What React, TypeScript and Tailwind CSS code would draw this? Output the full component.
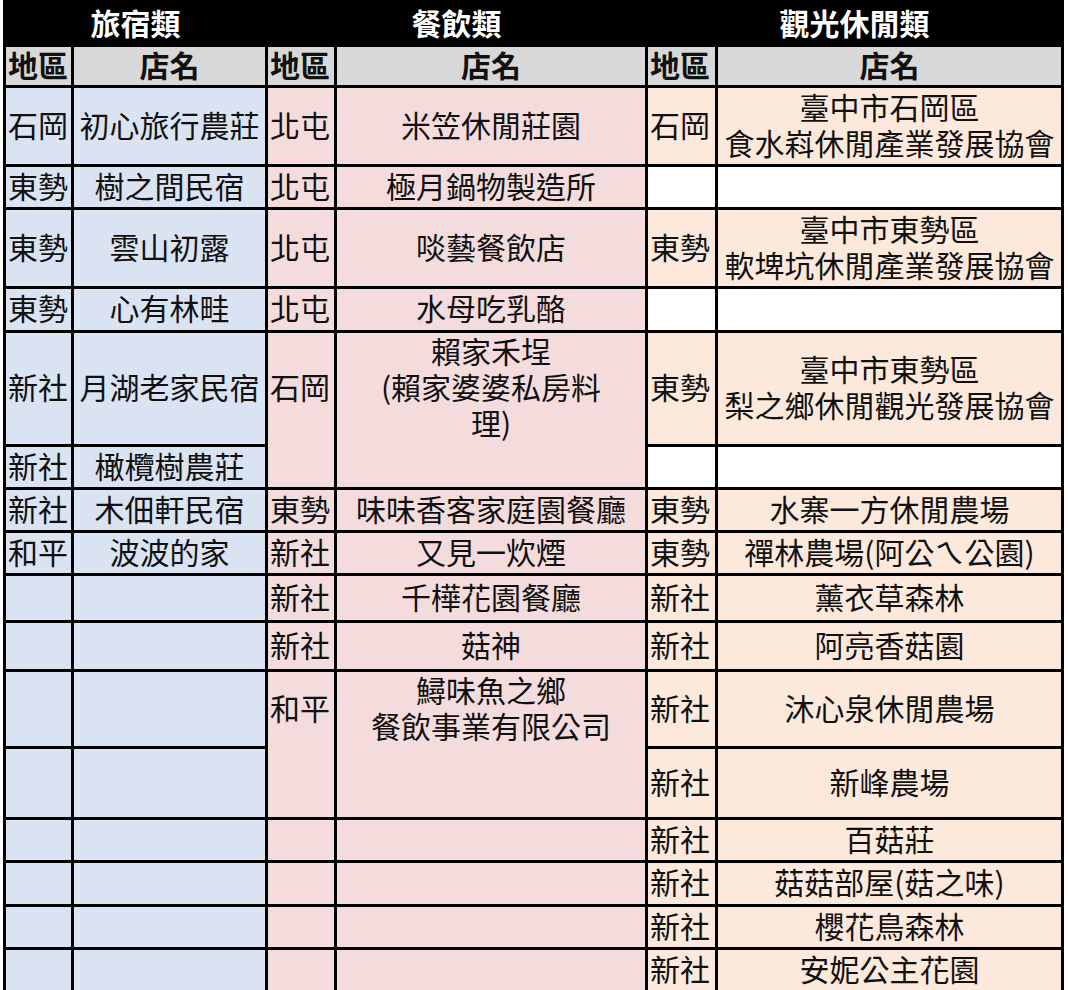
import React from "react";

const BLUE = "bg-[#dae3f1]";
const PINK = "bg-[#f4dcdd]";
const PEACH = "bg-[#fde9dc]";
const WHITE = "bg-white";
const GRAY = "bg-[#d8d8d8]";

type P = { bg: string; children?: React.ReactNode; extra?: string };

function R({ bg, children, extra = "" }: P) {
  return (
    <div className={`${bg} ${extra} flex items-center justify-start pl-[2px] pb-[5px] text-[30px] leading-[36px] whitespace-nowrap`}>
      {children}
    </div>
  );
}

function N({ bg, children, extra = "" }: P) {
  return (
    <div className={`${bg} ${extra} flex flex-col items-center justify-center pb-[5px] text-center text-[30px] leading-[36px] whitespace-nowrap`}>
      {children}
    </div>
  );
}

function Row2({ bg, region, name }: { bg: string; region?: string; name?: React.ReactNode }) {
  return (
    <>
      <R bg={bg}>{region}</R>
      <N bg={bg}>{name}</N>
    </>
  );
}

export default function App() {
  return (
    <div className="w-[1068px] h-[990px] bg-white overflow-hidden font-['Noto_Sans_CJK_TC','Noto_Sans_CJK_SC','Noto_Sans',sans-serif] text-[#111]">
      <div className="ml-[3px] w-[1061px] bg-black px-[3px] grid gap-[3px] grid-cols-[65px_191px_66px_308px_67px_343px] grid-rows-[44px_38px_76px_40px_76px_41px_111px_40px_40px_40px_44px_46px_74px_68px_40px_41px_40px_40px]">
        {/* header */}
        <div className="col-span-2 bg-black text-white font-bold text-[30px] leading-[36px] flex items-center justify-center">旅宿類</div>
        <div className="col-span-2 bg-black text-white font-bold text-[30px] leading-[36px] flex items-center justify-center">餐飲類</div>
        <div className="col-span-2 bg-black text-white font-bold text-[30px] leading-[36px] flex items-center justify-center">觀光休閒類</div>

        {/* subheader */}
        <R bg={GRAY} extra="font-bold">地區</R>
        <N bg={GRAY} extra="font-bold">店名</N>
        <R bg={GRAY} extra="font-bold">地區</R>
        <N bg={GRAY} extra="font-bold">店名</N>
        <R bg={GRAY} extra="font-bold">地區</R>
        <N bg={GRAY} extra="font-bold">店名</N>

        {/* r1 */}
        <Row2 bg={BLUE} region="石岡" name="初心旅行農莊" />
        <Row2 bg={PINK} region="北屯" name="米笠休閒莊園" />
        <Row2 bg={PEACH} region="石岡" name={<><span>臺中市石岡區</span><span>食水嵙休閒產業發展協會</span></>} />

        {/* r2 */}
        <Row2 bg={BLUE} region="東勢" name="樹之間民宿" />
        <Row2 bg={PINK} region="北屯" name="極月鍋物製造所" />
        <Row2 bg={WHITE} />

        {/* r3 */}
        <Row2 bg={BLUE} region="東勢" name="雲山初露" />
        <Row2 bg={PINK} region="北屯" name="啖藝餐飲店" />
        <Row2 bg={PEACH} region="東勢" name={<><span>臺中市東勢區</span><span>軟埤坑休閒產業發展協會</span></>} />

        {/* r4 */}
        <Row2 bg={BLUE} region="東勢" name="心有林畦" />
        <Row2 bg={PINK} region="北屯" name="水母吃乳酪" />
        <Row2 bg={WHITE} />

        {/* r5 */}
        <Row2 bg={BLUE} region="新社" name="月湖老家民宿" />
        <div className={`${PINK} row-span-2 flex flex-col`}>
          <div className="h-[111px] flex items-center pl-[2px] pb-[5px] text-[30px] leading-[36px] whitespace-nowrap">石岡</div>
        </div>
        <div className={`${PINK} row-span-2 flex flex-col`}>
          <div className="h-[111px] flex flex-col items-center justify-center pb-[5px] text-[30px] leading-[36px] whitespace-nowrap">
            <span>賴家禾埕</span>
            <span>(賴家婆婆私房料</span>
            <span>理)</span>
          </div>
        </div>
        <Row2 bg={PEACH} region="東勢" name={<><span>臺中市東勢區</span><span>梨之鄉休閒觀光發展協會</span></>} />

        {/* r6 */}
        <Row2 bg={BLUE} region="新社" name="橄欖樹農莊" />
        <Row2 bg={WHITE} />

        {/* r7 */}
        <Row2 bg={BLUE} region="新社" name="木佃軒民宿" />
        <Row2 bg={PINK} region="東勢" name="味味香客家庭園餐廳" />
        <Row2 bg={PEACH} region="東勢" name="水寨一方休閒農場" />

        {/* r8 */}
        <Row2 bg={BLUE} region="和平" name="波波的家" />
        <Row2 bg={PINK} region="新社" name="又見一炊煙" />
        <Row2 bg={PEACH} region="東勢" name="禪林農場(阿公ㄟ公園)" />

        {/* r9 */}
        <Row2 bg={BLUE} />
        <Row2 bg={PINK} region="新社" name="千樺花園餐廳" />
        <Row2 bg={PEACH} region="新社" name="薰衣草森林" />

        {/* r10 */}
        <Row2 bg={BLUE} />
        <Row2 bg={PINK} region="新社" name="菇神" />
        <Row2 bg={PEACH} region="新社" name="阿亮香菇園" />

        {/* r11 */}
        <Row2 bg={BLUE} />
        <div className={`${PINK} row-span-2 flex flex-col`}>
          <div className="h-[74px] flex items-center pl-[2px] pb-[5px] text-[30px] leading-[36px] whitespace-nowrap">和平</div>
        </div>
        <div className={`${PINK} row-span-2 flex flex-col`}>
          <div className="h-[74px] flex flex-col items-center justify-center pb-[5px] text-[30px] leading-[36px] whitespace-nowrap">
            <span>鱘味魚之鄉</span>
            <span>餐飲事業有限公司</span>
          </div>
        </div>
        <Row2 bg={PEACH} region="新社" name="沐心泉休閒農場" />

        {/* r12 */}
        <Row2 bg={BLUE} />
        <Row2 bg={PEACH} region="新社" name="新峰農場" />

        {/* r13 */}
        <Row2 bg={BLUE} />
        <Row2 bg={PINK} />
        <Row2 bg={PEACH} region="新社" name="百菇莊" />

        {/* r14 */}
        <Row2 bg={BLUE} />
        <Row2 bg={PINK} />
        <Row2 bg={PEACH} region="新社" name="菇菇部屋(菇之味)" />

        {/* r15 */}
        <Row2 bg={BLUE} />
        <Row2 bg={PINK} />
        <Row2 bg={PEACH} region="新社" name="櫻花鳥森林" />

        {/* r16 */}
        <Row2 bg={BLUE} />
        <Row2 bg={PINK} />
        <Row2 bg={PEACH} region="新社" name="安妮公主花園" />
      </div>
    </div>
  );
}
